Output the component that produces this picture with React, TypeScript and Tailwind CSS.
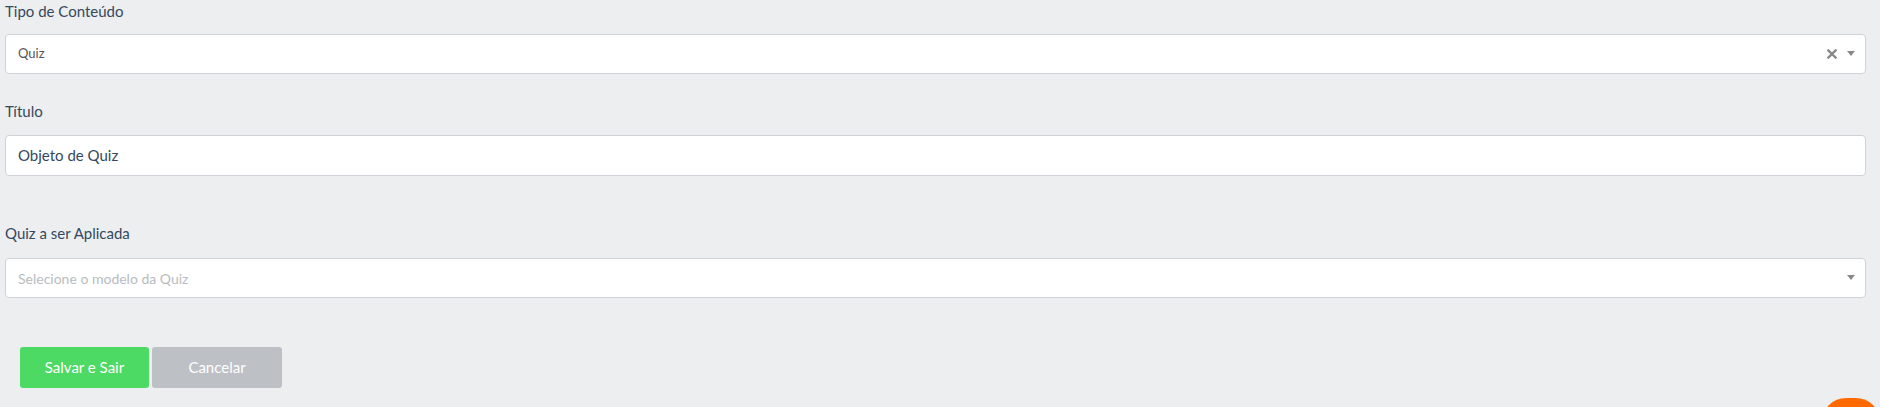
import React from "react";

export default function App() {
  return (
    <div
      className="relative w-full h-[407px] overflow-hidden bg-[#edeef0]"
      style={{ fontFamily: "Lato, 'Open Sans', sans-serif" }}
    >
      <div className="pl-[5px] pr-[14px] pt-[1px] flex flex-col">
        <label className="h-[20px] text-[15px] leading-[20px] text-[#34495e]">Tipo de Conteúdo</label>
        <div className="mt-[13px] h-[40px] bg-white border border-[#cfd2d6] rounded-[4px] flex items-center pl-[12px] pr-[10px]">
          <span className="flex-1 text-[13px] text-[#555]">Quiz</span>
          <svg width="10" height="10" viewBox="0 0 10 10" className="mr-[10px]">
            <path d="M1.5 1.5 L8.5 8.5 M8.5 1.5 L1.5 8.5" stroke="#888" strokeWidth="2.4" strokeLinecap="square" />
          </svg>
          <svg width="8" height="6" viewBox="0 0 8 6">
            <path d="M0 0 L8 0 L4 5 Z" fill="#888" />
          </svg>
        </div>

        <label className="mt-[27px] h-[20px] text-[15px] leading-[20px] text-[#34495e]">Título</label>
        <div className="mt-[14px] h-[41px] bg-white border border-[#cfd2d6] rounded-[4px] flex items-center pl-[12px]">
          <span className="text-[15px] text-[#34495e]">Objeto de Quiz</span>
        </div>

        <label className="mt-[47px] h-[20px] text-[15px] leading-[20px] text-[#34495e]">Quiz a ser Aplicada</label>
        <div className="mt-[15px] h-[40px] bg-white border border-[#cfd2d6] rounded-[4px] flex items-center pl-[12px] pr-[10px]">
          <span className="flex-1 text-[14px] text-[#b8bcc0]">Selecione o modelo da Quiz</span>
          <svg width="8" height="6" viewBox="0 0 8 6">
            <path d="M0 0 L8 0 L4 5 Z" fill="#888" />
          </svg>
        </div>

        <div className="mt-[49px] pl-[15px] flex gap-[3px]">
          <button className="w-[129px] h-[41px] rounded-[3px] bg-[#4cd964] text-white text-[15px]">Salvar e Sair</button>
          <button className="w-[130px] h-[41px] rounded-[3px] bg-[#bdc1c5] text-white text-[15px]">Cancelar</button>
        </div>
      </div>

      <div className="absolute left-[1822px] top-[398px] w-[58px] h-[58px] rounded-[24px] bg-[#ff6a00]" />
    </div>
  );
}
